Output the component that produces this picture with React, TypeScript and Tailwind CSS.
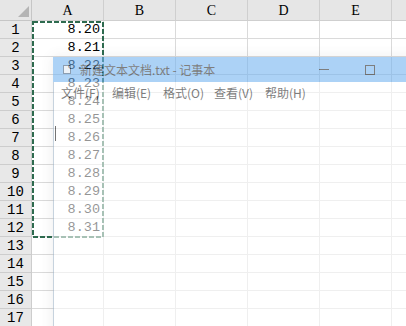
import React from "react";

const cols = ["A", "B", "C", "D", "E"];
const values: Record<number, string> = {
  1: "8.20", 2: "8.21", 3: "8.22", 4: "8.23", 5: "8.24", 6: "8.25",
  7: "8.26", 8: "8.27", 9: "8.28", 10: "8.29", 11: "8.30", 12: "8.31",
};
const rows = Array.from({ length: 17 }, (_, i) => i + 1);
const menus = ["文件(F)", "编辑(E)", "格式(O)", "查看(V)", "帮助(H)"];

export default function App() {
  return (
    <div className="relative w-[406px] h-[326px] overflow-hidden bg-white font-['Liberation_Mono',monospace] text-black">
      {/* column header */}
      <div className="flex h-[21px]">
        <div className="relative w-[32px] shrink-0 bg-[#e6e6e6] border-r border-b border-[#c6c6c6]">
          <svg className="absolute right-[2px] bottom-[3px]" width="11" height="11" viewBox="0 0 11 11">
            <polygon points="11,0 11,11 0,11" fill="#b4b4b4" />
          </svg>
        </div>
        {cols.map((c) => (
          <div
            key={c}
            className="w-[72px] shrink-0 bg-[#e6e6e6] border-r border-b border-[#cfcfcf] flex items-center justify-center font-['Liberation_Serif',serif] text-[14px] leading-none pt-[1px]"
          >
            {c}
          </div>
        ))}
        <div className="flex-1 bg-[#e6e6e6] border-b border-[#cfcfcf]" />
      </div>
      {rows.map((r) => (
        <div key={r} className="flex h-[18px]">
          <div className="w-[32px] shrink-0 bg-[#e8e8e8] border-r border-b border-[#cdcdcd] flex items-center justify-center text-[14px] leading-none">
            {r}
          </div>
          {cols.map((c) => (
            <div
              key={c}
              className="w-[72px] shrink-0 border-r border-b border-[#dadada] flex items-center justify-end pr-[3px] text-[13.5px] leading-none"
            >
              {c === "A" ? values[r] ?? "" : ""}
            </div>
          ))}
          <div className="flex-1 border-b border-[#dadada]" />
        </div>
      ))}

      {/* copy marquee */}
      <svg className="absolute left-[32px] top-[21px]" width="72" height="217" viewBox="0 0 72 217">
        <rect x="1" y="1" width="70" height="215" fill="none" stroke="#2e6b4f" strokeWidth="2" strokeDasharray="5 2" />
      </svg>

      {/* notepad window (fading in, translucent) */}
      <div className="absolute left-[53px] top-[57px] w-[386px] h-[300px] opacity-[0.58] shadow-[0_0_12px_rgba(0,0,0,0.12)] font-['Noto_Sans_CJK_SC','Noto_Sans',sans-serif] text-[12px] text-[#222]">
        <div className="flex h-[25px] items-center bg-[#72b3f1]">
          <div className="ml-[10px] w-[8px] h-[9px] border border-[#3a5a7a] bg-[#dfe9f3]" />
          <span className="ml-[9px] leading-none">新建文本文档.txt - 记事本</span>
          <div className="ml-auto flex h-full">
            <div className="w-[46px] flex items-center justify-center">
              <div className="w-[10px] h-[1px] bg-[#222]" />
            </div>
            <div className="w-[46px] flex items-center justify-center">
              <div className="w-[10px] h-[10px] border border-[#222]" />
            </div>
            <div className="w-[46px]" />
          </div>
        </div>
        <div className="flex h-[22px] items-center bg-white pl-[7px] border-l border-[#9fb4c8]">
          {menus.map((m) => (
            <span key={m} className="w-[51px] leading-none">
              {m}
            </span>
          ))}
        </div>
        <div className="relative h-[253px] bg-white border-l border-[#9fb4c8]">
          <div className="absolute left-[1px] top-[22px] w-[1px] h-[15px] bg-[#111]" />
        </div>
      </div>
    </div>
  );
}
